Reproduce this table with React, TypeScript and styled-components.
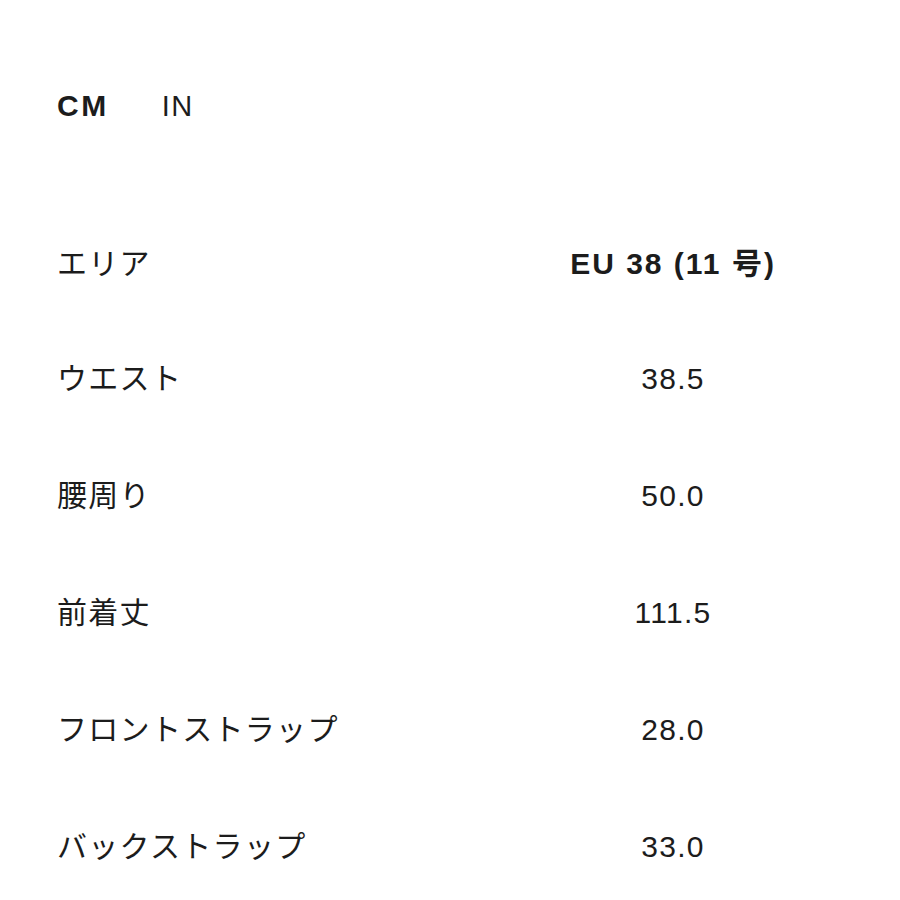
import React from "react";
import styled, { createGlobalStyle } from "styled-components";

const Global = createGlobalStyle`
  html, body { margin: 0; padding: 0; background: #ffffff; }
  body {
    font-family: "Liberation Sans", "Noto Sans CJK JP", sans-serif;
    color: #1c1c1c;
  }
`;

const Page = styled.div`
  width: 900px;
  height: 900px;
  box-sizing: border-box;
  padding: 89px 0 0 57px;
  overflow: hidden;
`;

const UnitTabs = styled.div`
  display: flex;
  align-items: center;
  gap: 53px;
  height: 34px;
`;

const UnitTab = styled.span<{ $active?: boolean }>`
  font-size: ${(p) => (p.$active ? "30px" : "29px")};
  letter-spacing: ${(p) => (p.$active ? "2.5px" : "1.5px")};
  font-weight: ${(p) => (p.$active ? 700 : 400)};
  line-height: 34px;
`;

const Table = styled.div`
  display: grid;
  grid-template-columns: 389px 454px;
  grid-template-rows: 115px;
  grid-auto-rows: 117px;
  margin-top: 123px;
`;

const Cell = styled.div<{ $align?: "left" | "center"; $bold?: boolean }>`
  display: flex;
  align-items: center;
  justify-content: ${(p) => (p.$align === "center" ? "center" : "flex-start")};
  font-size: 30px;
  letter-spacing: ${(p) => (p.$bold ? "2px" : "1.3px")};
  font-weight: ${(p) => (p.$bold ? 700 : 400)};
  height: 36px;
  line-height: 36px;
  white-space: nowrap;
`;

const rows: [string, string][] = [
  ["ウエスト", "38.5"],
  ["腰周り", "50.0"],
  ["前着丈", "111.5"],
  ["フロントストラップ", "28.0"],
  ["バックストラップ", "33.0"],
];

export default function App() {
  return (
    <>
      <Global />
      <Page>
        <UnitTabs>
          <UnitTab $active>CM</UnitTab>
          <UnitTab>IN</UnitTab>
        </UnitTabs>
        <Table>
          <Cell>エリア</Cell>
          <Cell $align="center" $bold>
            EU 38 (11 号)
          </Cell>
          {rows.map(([label, value]) => (
            <React.Fragment key={label}>
              <Cell>{label}</Cell>
              <Cell $align="center">{value}</Cell>
            </React.Fragment>
          ))}
        </Table>
      </Page>
    </>
  );
}
